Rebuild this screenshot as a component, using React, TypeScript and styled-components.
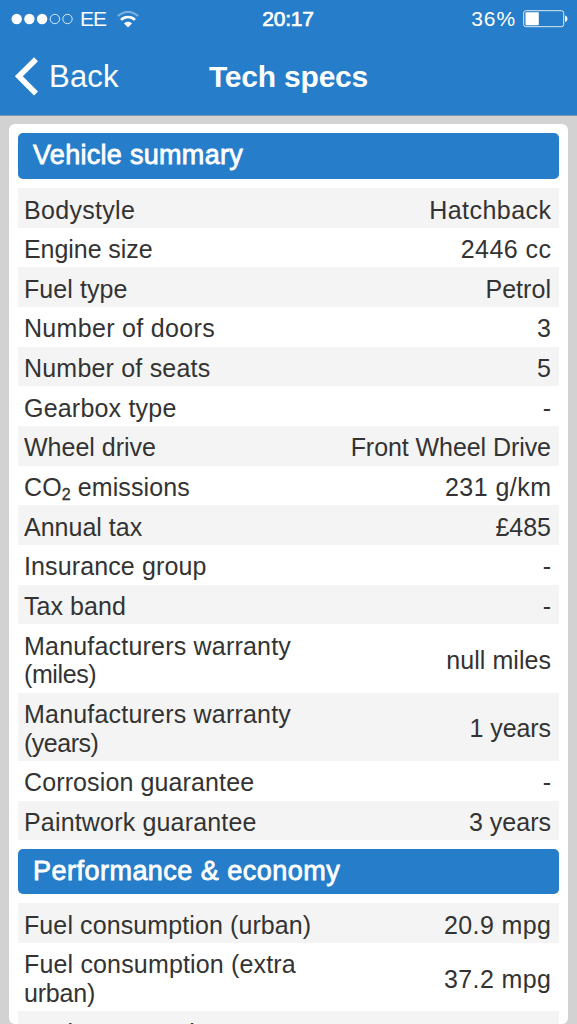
import React from "react";
import styled, { createGlobalStyle } from "styled-components";

const GlobalStyle = createGlobalStyle`
  * { box-sizing: border-box; }
  html, body { margin: 0; padding: 0; overflow: hidden; }
  body { background: #d2d2d2; font-family: "Liberation Sans", Arial, sans-serif; }
`;

const Screen = styled.div`
  display: flex;
  flex-direction: column;
  width: 577px;
  height: 1024px;
  overflow: hidden;
  background: #d2d2d2;
`;

const TopBar = styled.header`
  flex: none;
  height: 116px;
  background: #267dc9;
  border-bottom: 1px solid #8097ab;
  color: #fff;
`;

const StatusBar = styled.div`
  display: grid;
  grid-template-columns: 1fr auto 1fr;
  align-items: center;
  height: 38px;
  padding: 0 9px 0 11px;
  font-size: 21px;
  line-height: 24px;
`;

const StatusSide = styled.div<{ $end?: boolean }>`
  display: flex;
  align-items: center;
  justify-content: ${(p) => (p.$end ? "flex-end" : "flex-start")};
`;

const Carrier = styled.span`
  margin: 0 11px 0 6px;
  letter-spacing: -0.9px;
`;

const Clock = styled.span`
  margin-right: 3px;
  letter-spacing: -0.2px;
  -webkit-text-stroke: 0.7px #fff;
`;

const Charge = styled.span`
  margin-right: 7px;
  letter-spacing: 0.9px;
`;

const NavBar = styled.nav`
  display: grid;
  grid-template-columns: 1fr auto 1fr;
  align-items: center;
  height: 77px;
  padding: 0 14px;
`;

const BackButton = styled.a`
  display: flex;
  align-items: center;
  gap: 10px;
  font-size: 31px;
  line-height: 36px;
  letter-spacing: 0.2px;
`;

const Title = styled.h1`
  margin: 0;
  font-size: 30px;
  line-height: 36px;
  font-weight: 700;
  letter-spacing: -0.2px;
`;

const Card = styled.main`
  flex: none;
  height: 900px;
  margin: 8px 9px 0;
  padding: 9px 9px 0;
  overflow: hidden;
  background: #fff;
  border-radius: 6px;
`;

const SectionTitle = styled.h2<{ $height: number; $spacing: number }>`
  height: ${(p) => p.$height}px;
  margin: 0 0 9px;
  padding-left: 15px;
  border-radius: 5px;
  background: #267dc9;
  color: #fff;
  font-size: 27px;
  font-weight: 400;
  line-height: 44px;
  letter-spacing: ${(p) => p.$spacing}px;
  -webkit-text-stroke: 0.8px #fff;
`;

const Rows = styled.dl`
  margin: 0 0 9px;
`;

const Row = styled.div`
  display: flex;
  align-items: center;
  justify-content: space-between;
  padding: 7.5px 8px 3.5px 6px;
  color: #333;
  font-size: 25px;
  line-height: 28.66px;
  &:nth-child(odd) { background: #f4f4f4; }
`;

const Label = styled.dt<{ $spacing: number }>`
  max-width: 300px;
  letter-spacing: ${(p) => p.$spacing}px;
  sub {
    font-size: 16px;
    line-height: 0;
    vertical-align: -4px;
    -webkit-text-stroke: 0.3px #333;
  }
`;

const Tail = styled.span<{ $spacing: number }>`
  letter-spacing: ${(p) => p.$spacing}px;
`;

const Value = styled.dd<{ $spacing: number }>`
  margin: 0;
  letter-spacing: ${(p) => p.$spacing}px;
  margin-right: ${(p) => -p.$spacing}px;
`;

type Spec = { label: React.ReactNode; value: string; ls: number; vs: number };

const summary: Spec[] = [
  { label: "Bodystyle", value: "Hatchback", ls: 0.3, vs: 0.45 },
  { label: "Engine size", value: "2446 cc", ls: -0.06, vs: 0.45 },
  { label: "Fuel type", value: "Petrol", ls: 0.06, vs: 0.05 },
  { label: "Number of doors", value: "3", ls: 0.32, vs: 0 },
  { label: "Number of seats", value: "5", ls: 0.2, vs: 0 },
  { label: "Gearbox type", value: "-", ls: 0.2, vs: 0 },
  { label: "Wheel drive", value: "Front Wheel Drive", ls: 0, vs: -0.07 },
  { label: <>CO<sub>2</sub> emissions</>, value: "231 g/km", ls: 0.1, vs: 0.45 },
  { label: "Annual tax", value: "£485", ls: 0, vs: 0 },
  { label: "Insurance group", value: "-", ls: 0.12, vs: 0 },
  { label: "Tax band", value: "-", ls: 0.05, vs: 0 },
  { label: <>Manufacturers warranty <Tail $spacing={-0.4}>(miles)</Tail></>, value: "null miles", ls: 0.2, vs: 0.05 },
  { label: <>Manufacturers warranty <Tail $spacing={-0.5}>(years)</Tail></>, value: "1 years", ls: 0.2, vs: -0.1 },
  { label: "Corrosion guarantee", value: "-", ls: 0.12, vs: 0 },
  { label: "Paintwork guarantee", value: "3 years", ls: 0.17, vs: 0 },
];

const economy: Spec[] = [
  { label: "Fuel consumption (urban)", value: "20.9 mpg", ls: 0.1, vs: 0.4 },
  { label: <>Fuel consumption (extra <Tail $spacing={-0.2}>urban)</Tail></>, value: "37.2 mpg", ls: 0.16, vs: 0.4 },
  { label: "Fuel consumption (combined)", value: "", ls: 0.1, vs: 0.4 },
];

const SpecRows = ({ items }: { items: Spec[] }) => (
  <Rows>
    {items.map((s, i) => (
      <Row key={i}>
        <Label $spacing={s.ls}>{s.label}</Label>
        <Value $spacing={s.vs}>{s.value}</Value>
      </Row>
    ))}
  </Rows>
);

const Signal = () => (
  <svg width="63" height="12" viewBox="0 0 63 12">
    {[5.7, 18.4, 31.1].map((x) => <circle key={x} cx={x} cy="6" r="5.2" fill="#fff" />)}
    {[43.9, 56.5].map((x) => (
      <circle key={x} cx={x} cy="6" r="4.7" fill="none" stroke="#fff" strokeOpacity=".8" strokeWidth="1" />
    ))}
  </svg>
);

const Wifi = () => (
  <svg width="22" height="17" viewBox="0 0 22 17" fill="none" stroke="#fff">
    <path d="M0.9 5.2C6.8-.4 15.2-.4 21.1 5.2" strokeWidth="2.2" strokeOpacity=".4" />
    <path d="M4 8.9C8 5 14 5 18 8.9" strokeWidth="2.7" />
    <path d="M11 16.4L7 12.4C9.2 10.2 12.8 10.2 15 12.4Z" fill="#fff" stroke="none" />
  </svg>
);

const Battery = () => (
  <svg width="45" height="18" viewBox="0 0 45 18">
    <rect x="0.7" y="0.7" width="40" height="16" rx="2.2" fill="none" stroke="#fff" strokeOpacity=".85" />
    <rect x="2.5" y="2.2" width="13.3" height="13" rx="0.6" fill="#fff" />
    <path d="M42 5.4C45.3 6.2 45.3 11.2 42 12Z" fill="#fff" />
  </svg>
);

const Chevron = () => (
  <svg width="25" height="40" viewBox="0 0 25 40" fill="none" stroke="#fff" strokeWidth="5.6">
    <path d="M22 2.2L4.8 19.3L22 36.4" />
  </svg>
);

export default function App() {
  return (
    <Screen>
      <GlobalStyle />
      <TopBar>
        <StatusBar>
          <StatusSide>
            <Signal />
            <Carrier>EE</Carrier>
            <Wifi />
          </StatusSide>
          <Clock>20:17</Clock>
          <StatusSide $end>
            <Charge>36%</Charge>
            <Battery />
          </StatusSide>
        </StatusBar>
        <NavBar>
          <BackButton><Chevron />Back</BackButton>
          <Title>Tech specs</Title>
        </NavBar>
      </TopBar>
      <Card>
        <SectionTitle $height={46} $spacing={0.3}>Vehicle summary</SectionTitle>
        <SpecRows items={summary} />
        <SectionTitle $height={45} $spacing={0.48}>Performance &amp; economy</SectionTitle>
        <SpecRows items={economy} />
      </Card>
    </Screen>
  );
}
